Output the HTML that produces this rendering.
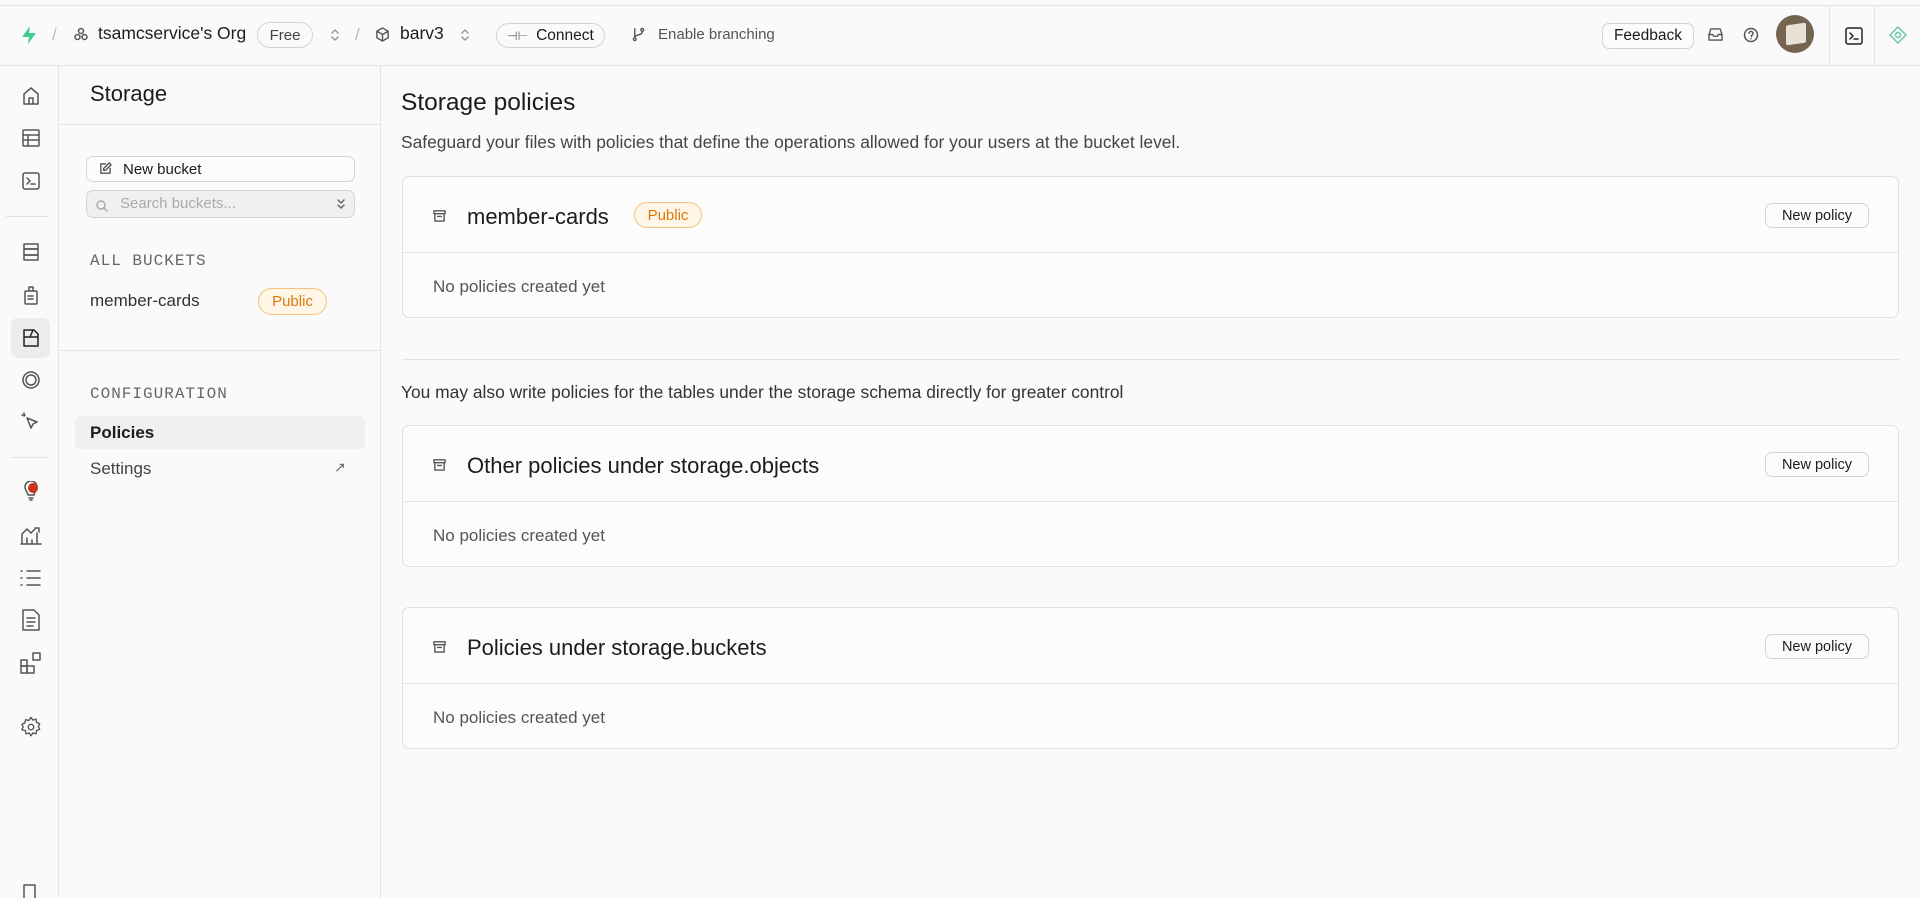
<!DOCTYPE html>
<html><head><meta charset="utf-8"><style>
*{box-sizing:border-box;margin:0;padding:0}
body{width:1920px;height:898px;overflow:hidden;background:#fafafa;font-family:"Liberation Sans",sans-serif;color:#1c1c1c;position:relative}
.a{position:absolute}
.hdr{left:0;top:5px;width:1920px;height:61px;border-top:1px solid #e4e4e4;border-bottom:1px solid #e4e4e4;background:#fafafa}
.t{position:absolute;white-space:nowrap;line-height:1}
.btn{position:absolute;border:1px solid #d4d4d4;border-radius:7px;background:#fcfcfc;font-size:15px;display:flex;align-items:center;justify-content:center;color:#1c1c1c}
.pill{position:absolute;border:1px solid #d4d4d4;border-radius:14px;font-size:15px;display:flex;align-items:center;justify-content:center;color:#444}
.pub{position:absolute;border:1px solid #f5c27a;background:#fff6e8;color:#d9790a;border-radius:14px;font-size:15px;display:flex;align-items:center;justify-content:center}
svg{position:absolute;fill:none;stroke:#555;stroke-width:1.5;stroke-linecap:round;stroke-linejoin:round}
.card{position:absolute;left:402px;width:1497px;height:142px;border:1px solid #e0e0e0;border-radius:7px;background:#fcfcfc}
.card .hd{position:absolute;left:0;top:0;right:0;height:76px;border-bottom:1px solid #e4e4e4}
.card .ti{position:absolute;left:64px;top:27px;font-size:22px;color:#1c1c1c}
.card .np{left:auto;right:29px;top:26px;width:104px;height:25px;font-size:14.5px}
.card .em{position:absolute;left:30px;top:100px;font-size:17px;color:#555}
.mono{font-family:"Liberation Mono",monospace;letter-spacing:1px;color:#666;font-size:16px}
</style></head><body>
<div class="a hdr"></div>
<svg style="left:19px;top:25px" width="20" height="20" viewBox="0 0 20 20"><path d="M11 1L3 12h7l-1 7 8-11h-7z" fill="#3ecf8e" stroke="none"/></svg>
<div class="t" style="left:52px;top:26px;font-size:17px;color:#bbb">/</div>
<svg style="left:73px;top:26px" width="16" height="16" viewBox="0 0 16 16"><circle cx="8" cy="5" r="2.5"/><circle cx="4.5" cy="11" r="2.5"/><circle cx="11.5" cy="11" r="2.5"/></svg>
<div class="t" style="left:98px;top:25px;font-size:17.5px">tsamcservice's Org</div>
<div class="pill" style="left:257px;top:22px;width:56px;height:26px">Free</div>
<svg style="left:330px;top:28px" width="10" height="14" viewBox="0 0 10 14"><path d="M2 5l3-3 3 3M2 9l3 3 3-3" stroke="#999"/></svg>
<div class="t" style="left:355px;top:26px;font-size:17px;color:#bbb">/</div>
<svg style="left:375px;top:27px" width="15" height="15" viewBox="0 0 16 16"><path d="M8 1l6 3.5v7L8 15l-6-3.5v-7zM2 4.5L8 8l6-3.5M8 8v7"/></svg>
<div class="t" style="left:400px;top:25px;font-size:17.5px">barv3</div>
<svg style="left:460px;top:28px" width="10" height="14" viewBox="0 0 10 14"><path d="M2 5l3-3 3 3M2 9l3 3 3-3" stroke="#999"/></svg>
<div class="pill" style="left:496px;top:23px;width:109px;height:25px;color:#1c1c1c;font-size:15.5px"><span style="font-size:12px;color:#666;margin-right:8px">⊣⊢</span>Connect</div>
<svg style="left:631px;top:27px" width="15" height="15" viewBox="0 0 16 16"><circle cx="4" cy="13" r="1.5"/><circle cx="12" cy="3" r="1.5"/><path d="M4 11V2M12 5c0 4-8 3-8 6"/></svg>
<div class="t" style="left:658px;top:27px;font-size:15px;color:#555">Enable branching</div>
<div class="btn" style="left:1602px;top:23px;width:92px;height:26px;font-size:15.5px">Feedback</div>
<svg style="left:1708px;top:28px" width="15" height="13" viewBox="0 0 16 14"><path d="M1 7l2-6h10l2 6v6H1zM1 7h4l1 2h4l1-2h4"/></svg>
<svg style="left:1743px;top:27px" width="16" height="16" viewBox="0 0 16 16"><circle cx="8" cy="8" r="6.5"/><path d="M6 6.3a2 2 0 1 1 2.5 2v1.2M8 11.6v.2"/></svg>
<div class="a" style="left:1776px;top:15px;width:38px;height:38px;border-radius:50%;background:#75644f"></div>
<div class="a" style="left:1786px;top:24px;width:20px;height:20px;background:#e8e2d6;border-radius:2px;transform:skewY(-8deg)"></div>
<div class="a" style="left:1829px;top:6px;width:1px;height:59px;background:#e4e4e4"></div>
<div class="a" style="left:1874px;top:6px;width:1px;height:59px;background:#e4e4e4"></div>
<svg style="left:1845px;top:27px" width="18" height="18" viewBox="0 0 18 18"><rect x="1" y="1" width="16" height="16" rx="2" stroke="#222"/><path d="M5 6l3 3-3 3M9 12h4" stroke="#222"/></svg>
<svg style="left:1889px;top:26px" width="18" height="18" viewBox="0 0 18 18"><path d="M9 1l8 8-8 8-8-8z" stroke="#6cc3a0"/><circle cx="9" cy="9" r="2.5" stroke="#6cc3a0"/></svg>

<div class="a" style="left:0;top:66px;width:59px;height:832px;border-right:1px solid #e4e4e4;background:#fafafa"></div>
<svg style="left:21px;top:86px" width="20" height="20" viewBox="0 0 20 20"><path d="M3 8l7-6 7 6v10H3zM8 18v-6h4v6"/></svg>
<svg style="left:21px;top:128px" width="20" height="20" viewBox="0 0 20 20"><rect x="2" y="2" width="16" height="16" rx="1"/><path d="M2 7h16M2 12h16M7 7v11"/></svg>
<svg style="left:21px;top:171px" width="20" height="20" viewBox="0 0 20 20"><rect x="2" y="2" width="16" height="16" rx="2"/><path d="M6 7l3 3-3 3M10 13h4"/></svg>
<div class="a" style="left:6px;top:216px;width:43px;height:1px;background:#e4e4e4"></div>
<svg style="left:21px;top:242px" width="20" height="20" viewBox="0 0 20 20"><rect x="3" y="2" width="14" height="5"/><rect x="3" y="7" width="14" height="6"/><rect x="3" y="13" width="14" height="5"/></svg>
<svg style="left:21px;top:285px" width="20" height="20" viewBox="0 0 20 20"><rect x="4" y="6" width="12" height="13" rx="1"/><path d="M8 6V2h4v4M7 11h5M7 14h5"/></svg>
<div class="a" style="left:11px;top:318px;width:39px;height:40px;border-radius:7px;background:#ececec"></div>
<svg style="left:21px;top:328px" width="20" height="20" viewBox="0 0 20 20"><path d="M3 2h10l4 4v12H3zM3 9h14M12 2l-3 7" stroke="#222"/></svg>
<svg style="left:21px;top:370px" width="20" height="20" viewBox="0 0 20 20"><circle cx="10" cy="10" r="8"/><circle cx="10" cy="10" r="5"/></svg>
<svg style="left:21px;top:412px" width="20" height="20" viewBox="0 0 20 20"><path d="M6 6l10 4-4 2-2 4zM3 1v3M1 3h3"/></svg>
<div class="a" style="left:10px;top:457px;width:39px;height:1px;background:#e4e4e4"></div>
<svg style="left:21px;top:481px" width="20" height="20" viewBox="0 0 20 20"><path d="M7 14c0-3-3-4-3-8a6 6 0 0 1 12 0c0 4-3 5-3 8zM8 17h4M9 19h2"/></svg>
<div class="a" style="left:28px;top:483px;width:10px;height:10px;border-radius:50%;background:#d0321e"></div>
<svg style="left:20px;top:525px" width="22" height="20" viewBox="0 0 22 20"><path d="M1 19h20M2 19V9l5-5 4 4 4-4M7 19v-6M12 19v-4M17 19V8M15 3h4v4"/></svg>
<svg style="left:20px;top:568px" width="22" height="20" viewBox="0 0 22 20"><path d="M7 3h13M7 10h13M7 17h13M1 3h1M1 10h1M1 17h1"/></svg>
<svg style="left:21px;top:609px" width="20" height="22" viewBox="0 0 20 22"><path d="M2 1h11l5 5v15H2zM6 9h8M6 13h8M6 17h6"/></svg>
<svg style="left:20px;top:652px" width="22" height="22" viewBox="0 0 22 22"><rect x="1" y="8" width="6" height="6"/><rect x="1" y="14" width="6" height="7"/><rect x="7" y="14" width="7" height="7"/><rect x="13" y="1" width="7" height="7"/></svg>
<svg style="left:20px;top:716px" width="22" height="22" viewBox="0 0 24 24"><circle cx="12" cy="12" r="3"/><path d="M12 1.5l2 3 3.5-1 .5 3.5 3.5 1.5-1.5 3 1.5 3-3.5 1.5-.5 3.5-3.5-1-2 3-2-3-3.5 1-.5-3.5L2 15l1.5-3L2 9l3.5-1.5L6 4l3.5 1z"/></svg>
<svg style="left:23px;top:884px" width="14" height="14" viewBox="0 0 14 14"><rect x="1" y="1" width="11" height="14"/></svg>

<div class="a" style="left:60px;top:66px;width:321px;height:832px;border-right:1px solid #e4e4e4;background:#fafafa"></div>
<div class="t" style="left:90px;top:83px;font-size:22px">Storage</div>
<div class="a" style="left:60px;top:124px;width:320px;height:1px;background:#e4e4e4"></div>
<div class="btn" style="left:86px;top:156px;width:269px;height:26px;justify-content:flex-start;padding-left:36px;font-size:15px">New bucket</div>
<svg style="left:99px;top:162px" width="13" height="13" viewBox="0 0 14 14"><path d="M7 2H2v10h10V7M11 1l2 2-6 6H5V7z"/></svg>
<div class="a" style="left:86px;top:190px;width:269px;height:28px;border:1px solid #d4d4d4;border-radius:7px;background:#f0f0f0"></div>
<svg style="left:96px;top:200px" width="12" height="12" viewBox="0 0 12 12"><circle cx="5" cy="5" r="4" stroke="#aaa"/><path d="M8 8l3 3" stroke="#aaa"/></svg>
<div class="t" style="left:120px;top:196px;font-size:15px;color:#aaa">Search buckets...</div>
<svg style="left:336px;top:197px" width="10" height="14" viewBox="0 0 10 14"><path d="M2 3l3 3 3-3M2 8l3 3 3-3" stroke="#666"/></svg>
<div class="t mono" style="left:90px;top:253px">ALL BUCKETS</div>
<div class="t" style="left:90px;top:292px;font-size:17px;color:#333">member-cards</div>
<div class="pub" style="left:258px;top:288px;width:69px;height:27px">Public</div>
<div class="a" style="left:60px;top:350px;width:320px;height:1px;background:#e4e4e4"></div>
<div class="t mono" style="left:90px;top:386px">CONFIGURATION</div>
<div class="a" style="left:75px;top:416px;width:290px;height:33px;border-radius:6px;background:#f0f0f0"></div>
<div class="t" style="left:90px;top:424px;font-size:17px;font-weight:bold">Policies</div>
<div class="t" style="left:90px;top:460px;font-size:17px;color:#444">Settings</div>
<div class="t" style="left:334px;top:460px;font-size:14px;color:#666">↗</div>

<div class="t" style="left:401px;top:91px;font-size:24.5px">Storage policies</div>
<div class="t" style="left:401px;top:134px;font-size:17.4px;color:#444">Safeguard your files with policies that define the operations allowed for your users at the bucket level.</div>

<div class="card" style="top:176px"><div class="hd"></div>
<svg style="left:30px;top:32px" width="13" height="13" viewBox="0 0 14 14"><path d="M1 2h12v3H1zM2 5v8h10V5M5 8h4"/></svg>
<div class="ti">member-cards</div>
<div class="pub" style="left:231px;top:25px;width:68px;height:26px">Public</div>
<div class="btn np">New policy</div>
<div class="em">No policies created yet</div></div>

<div class="a" style="left:402px;top:359px;width:1497px;height:1px;background:#e4e4e4"></div>
<div class="t" style="left:401px;top:384px;font-size:17.4px;color:#333">You may also write policies for the tables under the storage schema directly for greater control</div>

<div class="card" style="top:425px"><div class="hd"></div>
<svg style="left:30px;top:32px" width="13" height="13" viewBox="0 0 14 14"><path d="M1 2h12v3H1zM2 5v8h10V5M5 8h4"/></svg>
<div class="ti">Other policies under storage.objects</div>
<div class="btn np">New policy</div>
<div class="em">No policies created yet</div></div>

<div class="card" style="top:607px"><div class="hd"></div>
<svg style="left:30px;top:32px" width="13" height="13" viewBox="0 0 14 14"><path d="M1 2h12v3H1zM2 5v8h10V5M5 8h4"/></svg>
<div class="ti">Policies under storage.buckets</div>
<div class="btn np">New policy</div>
<div class="em">No policies created yet</div></div>
</body></html>
